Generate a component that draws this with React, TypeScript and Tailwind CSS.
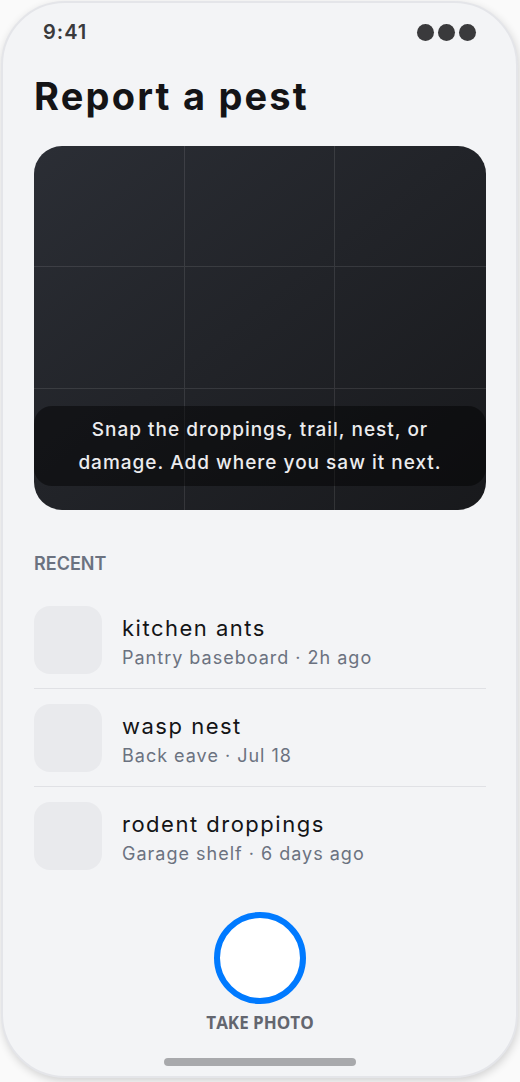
import React from 'react'

const RECENT = [
  { title: 'kitchen ants', meta: 'Pantry baseboard · 2h ago' },
  { title: 'wasp nest', meta: 'Back eave · Jul 18' },
  { title: 'rodent droppings', meta: 'Garage shelf · 6 days ago' },
]

export default function App() {
  return (
    <div className="min-h-screen bg-[#fafafa] pt-[1px] font-['Inter',sans-serif]">
      <div className="ml-[1px] w-[517px] h-[1077px] rounded-[64px] border-2 border-[#e4e5e9] bg-[#f3f4f6] shadow-[1px_3px_8px_rgba(0,0,0,0.16)] overflow-hidden flex flex-col pl-[31px] pr-[30px]">
        {/* Status bar */}
        <div className="pt-[17px] pl-[9px] pr-[10px] flex items-center justify-between">
          <span className="text-[20px] leading-[24px] font-semibold tracking-[1px] text-[#3a3a3c]">9:41</span>
          <div className="flex gap-[4px]">
            <span className="w-[17px] h-[17px] rounded-full bg-[#3a3a3c]" />
            <span className="w-[17px] h-[17px] rounded-full bg-[#3a3a3c]" />
            <span className="w-[17px] h-[17px] rounded-full bg-[#3a3a3c]" />
          </div>
        </div>

        <h1 className="mt-[30px] text-[38px] leading-[44px] font-bold tracking-[2.2px] text-[#141416]">
          Report a pest
        </h1>

        {/* Camera viewfinder */}
        <div className="relative mt-[28px] h-[364px] rounded-[28px] overflow-hidden bg-gradient-to-br from-[#2b2e35] to-[#18191c]">
          <div className="grid grid-cols-3 grid-rows-3 h-full">
            {Array.from({ length: 9 }).map((_, i) => (
              <div
                key={i}
                className={`${i % 3 !== 2 ? 'border-r' : ''} ${i < 6 ? 'border-b' : ''} border-white/10`}
              />
            ))}
          </div>
          <div className="absolute inset-x-0 bottom-6 h-[80px] rounded-[18px] bg-black/45 flex items-center justify-center">
            <p className="text-center text-[19px] leading-[33px] font-medium tracking-[1px] text-[#ececee]">
              Snap the droppings, trail, nest, or
              <br />
              damage. Add where you saw it next.
            </p>
          </div>
        </div>

        <h2 className="mt-[42px] text-[18px] leading-[24px] font-semibold text-[#6b7280] uppercase">Recent</h2>

        <div className="mt-[15px]">
          {RECENT.map((r, i) => (
            <div
              key={r.title}
              className={`flex items-center gap-[20px] pt-[15px] pb-[14px] ${i < RECENT.length - 1 ? 'border-b border-[#e0e1e5]' : ''}`}
            >
              <div className="w-[68px] h-[68px] rounded-[16px] bg-[#e9eaed] shrink-0" />
              <div className="pt-[4px]">
                <p className="text-[22px] leading-[28px] tracking-[1.5px] text-[#141416]">{r.title}</p>
                <p className="mt-[4px] text-[18px] leading-[24px] tracking-[1px] text-[#6b7280]">{r.meta}</p>
              </div>
            </div>
          ))}
        </div>

        {/* Shutter */}
        <div className="mt-[28px] flex flex-col items-center">
          <button className="w-[92px] h-[92px] rounded-full border-[6px] border-[#007aff] bg-white" />
          <span className="mt-[7px] text-[17px] leading-[24px] font-bold text-[#63666f] font-['Open_Sans',sans-serif]">
            TAKE PHOTO
          </span>
          <div className="mt-[23px] w-[192px] h-[8px] rounded-full bg-[#a8a9ac]" />
        </div>
      </div>
    </div>
  )
}
